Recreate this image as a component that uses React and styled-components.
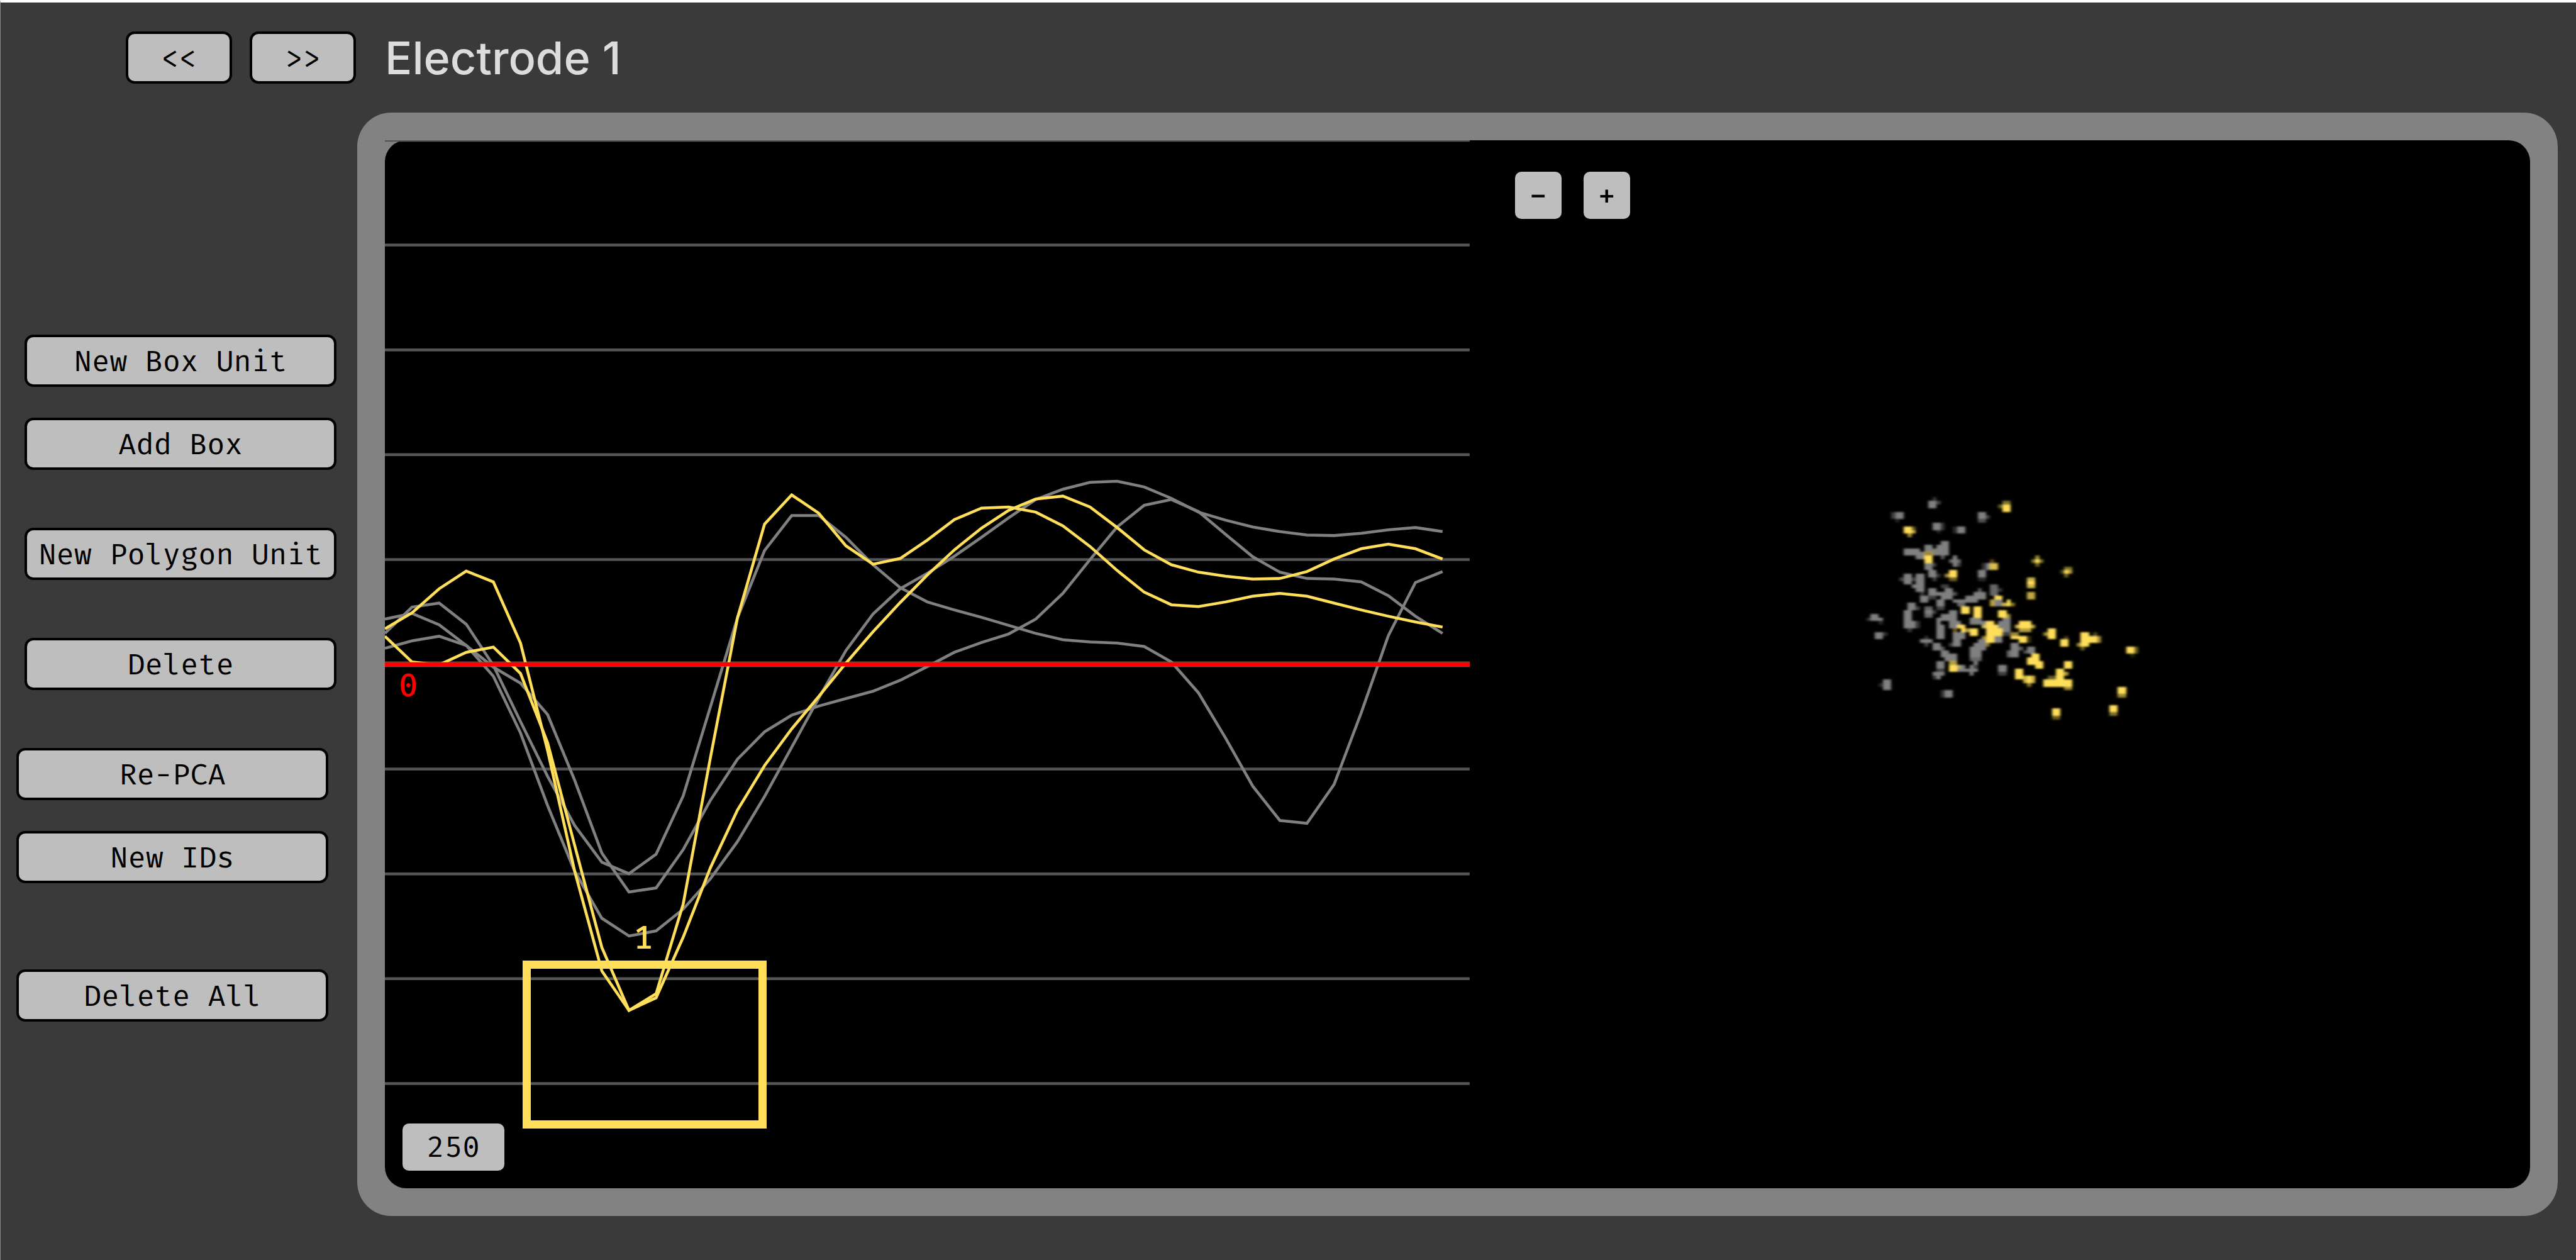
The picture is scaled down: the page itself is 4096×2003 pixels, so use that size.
import React from "react";
import styled, { createGlobalStyle } from "styled-components";

const ink = {
  page: "#3a3a3a",
  frame: "#828282",
  button: "#bebebe",
  grid: "#555555",
  trace: "#808080",
  unit: "#ffdf5a",
  zero: "#ff0000",
};

const mono = '"Fira Mono", "DejaVu Sans Mono", "Liberation Mono", monospace';

const GlobalStyle = createGlobalStyle`
  *, *::before, *::after { box-sizing: border-box; }
  html, body { margin: 0; background: ${ink.page}; }
`;

const Page = styled.div`
  display: flex;
  flex-direction: column;
  min-height: 100vh;
  background: ${ink.page};
  border-top: 4px solid #ffffff;
  border-left: 1px solid #8a8a8a;
`;

const Header = styled.header`
  display: flex;
  align-items: center;
  gap: 28px;
  padding: 46px 28px 46px 199px;
`;

const Title = styled.h1`
  margin: 0 0 0 18px;
  font-family: Inter, "Liberation Sans", sans-serif;
  font-size: 72px;
  font-weight: 500;
  line-height: 83px;
  color: #dcdcdc;
`;

const Button = styled.button`
  display: block;
  width: ${(p) => p.$width}px;
  height: 83px;
  padding: 0;
  border: 4px solid #000000;
  border-radius: 14px;
  background: ${ink.button};
  color: #000000;
  font-family: ${mono};
  font-size: 47px;
  font-weight: 400;
  line-height: 74px;
  text-align: center;
  white-space: nowrap;
  cursor: pointer;
`;

const Body = styled.main`
  flex: 1;
  display: grid;
  grid-template-columns: 567px minmax(0, 1fr);
  padding: 0 29px 70px 0;
`;

const Sidebar = styled.nav`
  display: flex;
  flex-direction: column;
  gap: 92px;
  padding-top: 353px;
`;

const Group = styled.div`
  display: flex;
  flex-direction: column;
  gap: 49px;
  padding-left: ${(p) => (p.$outdent ? 25 : 38)}px;
`;

const LowerGroups = styled.div`
  display: flex;
  flex-direction: column;
  gap: 137px;
`;

const Frame = styled.section`
  display: grid;
  padding: 44px;
  border-radius: 54px;
  background: ${ink.frame};
`;

const Screen = styled.div`
  display: grid;
  grid-template-columns: minmax(0, 1023fr) minmax(0, 1000fr);
  border-radius: 34px;
  background: #000000;
`;

const Pane = styled.div`
  position: relative;
  min-width: 0;
`;

const Drawing = styled.svg`
  position: absolute;
  inset: 0;
  display: block;
  width: 100%;
  height: 100%;
`;

const ZeroLabel = styled.span`
  position: absolute;
  top: 50%;
  left: 22px;
  padding-top: 4px;
  font-family: ${mono};
  font-size: 51px;
  font-weight: 500;
  line-height: 60px;
  color: ${ink.zero};
`;

const UnitBox = styled.div`
  position: absolute;
  left: 12.7%;
  top: 78.3%;
  width: 22.5%;
  height: 16%;
  border: 13px solid ${ink.unit};
`;

const UnitLabel = styled.span`
  position: absolute;
  bottom: 100%;
  left: 0;
  right: 0;
  padding: 0 4px 19px 0;
  font-family: ${mono};
  font-size: 51px;
  font-weight: 500;
  line-height: 60px;
  text-align: center;
  color: ${ink.unit};
`;

const OverlayButton = styled(Button)`
  height: 75px;
  border: 0;
  border-radius: 10px;
  line-height: 75px;
`;

const ZoomButton = styled(OverlayButton)`
  font-size: 56px;
`;

const ScaleCorner = styled.div`
  position: absolute;
  left: 28px;
  bottom: 28px;
`;

const ZoomBar = styled.div`
  position: relative;
  display: flex;
  gap: 35px;
  padding: 50px 72px;
`;

// Plot units of the waveform canvas: 40 sample slots, ten scale divisions.
const PLOT_W = 1897;
const PLOT_H = 1832;
const STEP = PLOT_W / 40;

const traces = [
  {
    color: ink.trace,
    y: [
      862, 816, 809, 846, 918, 1016, 1112, 1198, 1262, 1282, 1248, 1146, 991,
      835, 717, 656, 656, 694, 742, 782, 807, 821, 834, 848, 862, 873, 877,
      879, 885, 912, 966, 1045, 1129, 1189, 1194, 1126, 1001, 866, 773, 754,
    ],
  },
  {
    color: ink.trace,
    y: [
      837, 827, 847, 883, 921, 949, 1004, 1119, 1246, 1314, 1307, 1240, 1154,
      1082, 1034, 1005, 989, 976, 963, 944, 920, 895, 878, 863, 837, 792, 733,
      676, 638, 628, 649, 689, 728, 755, 766, 767, 772, 796, 832, 862,
    ],
  },
  {
    color: ink.trace,
    y: [
      888, 875, 867, 883, 937, 1036, 1163, 1278, 1360, 1391, 1382, 1344, 1291,
      1226, 1147, 1061, 975, 892, 828, 784, 757, 727, 694, 660, 628, 610, 598,
      596, 606, 626, 650, 664, 676, 684, 690, 691, 687, 681, 677, 684,
    ],
  },
  {
    color: ink.unit,
    y: [
      867, 912, 917, 895, 886, 932, 1053, 1233, 1411, 1521, 1499, 1393, 1272,
      1171, 1093, 1029, 972, 914, 859, 808, 760, 716, 678, 647, 627, 622, 641,
      677, 716, 742, 755, 762, 767, 766, 754, 732, 714, 706, 714, 732,
    ],
  },
  {
    color: ink.unit,
    y: [
      854, 826, 784, 753, 772, 879, 1067, 1278, 1452, 1521, 1492, 1335, 1080,
      835, 671, 620, 652, 709, 741, 731, 699, 663, 643, 641, 650, 674, 710,
      752, 790, 812, 815, 807, 797, 792, 797, 809, 821, 832, 842, 851,
    ],
  },
];

// Spike clusters on the scatter canvas: [column, row, width, height, opacity].
const unsorted = [
  [18, 5, 2, 2], [20, 5, 1, 1, 0.5], [19, 4, 1, 1, 0.4],
  [10, 8, 2, 2], [9, 8, 1, 2, 0.5], [10, 10, 1, 1, 0.25],
  [30, 8, 2, 2], [30, 10, 2, 1, 0.6], [32, 9, 1, 1, 0.5],
  [19, 11, 2, 2], [21, 11, 1, 2, 0.4], [20, 13, 1, 1, 0.25],
  [25, 12, 2, 2], [24, 12, 1, 2, 0.3],
  [12, 18, 4, 2], [15, 19, 2, 2], [17, 17, 2, 2], [19, 18, 3, 2],
  [21, 16, 2, 4], [20, 17, 1, 1], [21, 20, 1, 1, 0.7],
  [17, 22, 2, 2], [19, 22, 1, 1, 0.5], [18, 24, 2, 2], [20, 25, 1, 1, 0.4], [19, 26, 1, 1, 0.5],
  [24, 20, 1, 3], [23, 21, 3, 1, 0.8], [25, 22, 1, 1, 0.5],
  [30, 24, 2, 2], [30, 26, 2, 1, 0.3], [32, 22, 1, 2], [31, 22, 1, 2, 0.4],
  [12, 25, 2, 3], [11, 26, 1, 1, 0.5], [14, 26, 1, 1, 0.5],
  [15, 25, 2, 5], [14, 28, 1, 1], [16, 30, 1, 1, 0.4],
  [16, 31, 2, 2], [18, 29, 2, 2], [18, 31, 2, 1, 0.5],
  [21, 28, 2, 1, 0.5], [22, 29, 2, 1], [20, 30, 1, 1], [21, 30, 3, 2],
  [24, 30, 1, 1, 0.6], [20, 32, 2, 2], [20, 34, 2, 1, 0.5],
  [24, 32, 3, 1], [25, 33, 2, 1, 0.8],
  [27, 31, 3, 2], [29, 30, 3, 2], [30, 29, 1, 1, 0.7],
  [33, 28, 2, 3, 0.8], [35, 29, 1, 1, 0.4], [34, 32, 2, 2],
  [13, 33, 2, 2], [15, 34, 1, 1, 0.5], [12, 35, 2, 3], [12, 38, 3, 2],
  [15, 38, 1, 2, 0.4], [13, 40, 1, 1, 0.4],
  [17, 34, 2, 3, 0.8], [17, 35, 2, 1], [19, 35, 1, 1, 0.5],
  [4, 36, 2, 2], [3, 37, 1, 1, 0.4], [6, 37, 1, 1], [6, 38, 1, 1, 0.3],
  [5, 41, 2, 2], [7, 41, 1, 1, 0.4],
  [23, 35, 2, 4], [21, 36, 2, 2], [20, 37, 1, 2], [20, 39, 2, 4], [23, 38, 3, 2],
  [24, 41, 2, 4], [26, 41, 1, 2], [23, 44, 1, 1, 0.5],
  [28, 37, 3, 2], [30, 38, 2, 1], [31, 39, 1, 1],
  [35, 38, 3, 3], [36, 37, 2, 1], [36, 41, 2, 1, 0.5], [34, 41, 2, 3],
  [16, 43, 3, 1], [17, 42, 1, 1, 0.4], [17, 44, 1, 1, 0.5],
  [19, 44, 2, 2], [21, 45, 1, 1, 0.7], [21, 46, 2, 2], [23, 47, 2, 2], [22, 48, 1, 1],
  [20, 49, 2, 2], [20, 51, 2, 1, 0.5], [19, 52, 3, 1], [20, 53, 1, 1], [19, 53, 1, 1, 0.4],
  [25, 50, 2, 2], [27, 51, 3, 1], [28, 50, 1, 3], [29, 50, 1, 1, 0.5],
  [29, 44, 3, 2], [30, 43, 2, 1], [28, 45, 3, 3], [28, 48, 3, 1, 0.8], [29, 49, 1, 1],
  [35, 50, 2, 2], [35, 52, 2, 1, 0.5],
  [7, 54, 2, 3], [6, 55, 1, 1, 0.3], [22, 57, 2, 2], [21, 57, 1, 2, 0.4],
  [38, 44, 2, 4], [37, 46, 3, 2, 0.8], [40, 45, 1, 1, 0.7],
  [42, 45, 2, 2], [41, 46, 1, 1, 0.6],
];

const sorted = [
  [36, 6, 2, 2], [36, 5, 2, 1, 0.5], [35, 6, 1, 1, 0.4],
  [12, 12, 2, 2], [14, 13, 1, 1, 0.8], [14, 12, 1, 1, 0.4], [13, 14, 1, 1, 0.6],
  [17, 20, 2, 2], [17, 19, 2, 1, 0.6],
  [23, 24, 2, 2], [22, 25, 1, 1, 0.6], [23, 26, 2, 1, 0.4],
  [33, 22, 2, 2, 0.85], [33, 21, 1, 1, 0.3],
  [34, 31, 2, 1], [33, 32, 1, 2, 0.7], [37, 32, 1, 2], [36, 33, 1, 1, 0.8], [38, 33, 1, 1, 0.5],
  [26, 34, 2, 2], [29, 34, 2, 3], [35, 35, 2, 2], [37, 36, 1, 1, 0.6],
  [25, 39, 2, 1], [26, 40, 1, 1], [24, 40, 1, 1, 0.4],
  [28, 40, 2, 2], [27, 40, 1, 1, 0.7],
  [32, 38, 2, 6], [34, 40, 2, 2], [31, 39, 1, 1, 0.6], [34, 39, 1, 1], [31, 42, 1, 1, 0.6], [32, 44, 1, 1, 0.5],
  [44, 21, 1, 1], [43, 21, 1, 1, 0.5], [45, 21, 1, 1, 0.5], [44, 20, 1, 1, 0.6], [44, 22, 1, 1, 0.4],
  [51, 24, 1, 1], [50, 24, 1, 1, 0.3], [52, 24, 1, 1, 0.7], [51, 23, 2, 1, 0.5], [51, 25, 1, 1, 0.4],
  [42, 26, 2, 3, 0.8], [42, 27, 2, 1], [42, 30, 2, 2, 0.75],
  [40, 38, 3, 2], [40, 40, 3, 1, 0.7], [39, 39, 1, 1, 0.8], [43, 39, 1, 1, 0.7],
  [38, 42, 2, 1], [38, 41, 2, 1, 0.6], [40, 42, 2, 2], [42, 42, 1, 2, 0.2],
  [47, 40, 2, 3], [46, 41, 1, 1, 0.6], [50, 43, 2, 2], [51, 42, 1, 1, 0.25],
  [55, 41, 2, 4], [54, 44, 1, 1, 0.6], [55, 45, 1, 1, 0.4], [57, 42, 2, 2], [59, 42, 1, 2, 0.6], [58, 41, 1, 1, 0.3],
  [66, 45, 2, 2], [68, 45, 1, 2, 0.4], [67, 47, 1, 1, 0.15],
  [42, 48, 3, 2], [43, 47, 2, 1], [44, 49, 2, 2],
  [51, 49, 2, 2], [39, 51, 2, 3], [41, 53, 3, 2, 0.8], [42, 53, 1, 2], [42, 55, 1, 1, 0.5],
  [49, 51, 2, 3], [51, 52, 1, 1, 0.7], [46, 54, 5, 2], [47, 53, 2, 1, 0.4],
  [51, 54, 2, 2], [51, 56, 2, 1, 0.6],
  [64, 56, 2, 2], [64, 58, 2, 1, 0.6], [62, 61, 2, 2], [62, 63, 2, 1, 0.5],
  [48, 62, 2, 2], [48, 64, 2, 1, 0.4],
  [23, 50, 2, 2], [23, 49, 2, 1, 0.7], [25, 50, 1, 1, 0.4],
];

function Waveforms() {
  const divisions = Array.from({ length: 10 }, (_, i) => (i * PLOT_H) / 10);
  return (
    <Drawing
      viewBox={`0 0 ${PLOT_W} ${PLOT_H}`}
      preserveAspectRatio="none"
      role="img"
      aria-label="Spike waveforms"
    >
      {divisions.map((y, i) => (
        <line
          key={y}
          x1="0"
          x2={PLOT_W}
          y1={y}
          y2={y}
          stroke={ink.grid}
          strokeWidth={i === 5 ? 10 : 5}
        />
      ))}
      {traces.map((t, i) => (
        <polyline
          key={i}
          points={t.y.map((y, n) => `${n * STEP},${y}`).join(" ")}
          fill="none"
          stroke={t.color}
          strokeWidth="5"
        />
      ))}
      <line
        x1="0"
        x2={PLOT_W}
        y1={PLOT_H / 2}
        y2={PLOT_H / 2}
        stroke={ink.zero}
        strokeWidth="7"
      />
    </Drawing>
  );
}

function Cells({ cells, color }) {
  return (
    <g fill={color}>
      {cells.map(([x, y, w, h, o = 1], i) => (
        <rect key={i} x={x} y={y} width={w} height={h} opacity={o} />
      ))}
    </g>
  );
}

function Scatter() {
  return (
    <Drawing
      viewBox="-93.3 -94 257.4 287.7"
      preserveAspectRatio="none"
      shapeRendering="crispEdges"
      role="img"
      aria-label="Principal component scatter"
    >
      <defs>
        <filter id="smooth" filterUnits="userSpaceOnUse" x="-5" y="-5" width="85" height="80">
          <feGaussianBlur stdDeviation="0.3" />
        </filter>
      </defs>
      <g filter="url(#smooth)">
        <Cells cells={unsorted} color={ink.trace} />
        <Cells cells={sorted} color={ink.unit} />
      </g>
    </Drawing>
  );
}

export default function App() {
  return (
    <>
      <GlobalStyle />
      <Page>
        <Header>
          <Button type="button" $width={169}>{"<<"}</Button>
          <Button type="button" $width={169}>{">>"}</Button>
          <Title>Electrode 1</Title>
        </Header>
        <Body>
          <Sidebar>
            <Group>
              <Button type="button" $width={496}>New Box Unit</Button>
              <Button type="button" $width={496}>Add Box</Button>
            </Group>
            <Group>
              <Button type="button" $width={496}>New Polygon Unit</Button>
            </Group>
            <Group>
              <Button type="button" $width={496}>Delete</Button>
            </Group>
            <LowerGroups>
              <Group $outdent>
                <Button type="button" $width={496}>Re-PCA</Button>
                <Button type="button" $width={496}>New IDs</Button>
              </Group>
              <Group $outdent>
                <Button type="button" $width={496}>Delete All</Button>
              </Group>
            </LowerGroups>
          </Sidebar>
          <Frame>
            <Screen>
              <Pane>
                <Waveforms />
                <ZeroLabel>0</ZeroLabel>
                <UnitBox>
                  <UnitLabel>1</UnitLabel>
                </UnitBox>
                <ScaleCorner>
                  <OverlayButton type="button" $width={162}>250</OverlayButton>
                </ScaleCorner>
              </Pane>
              <Pane>
                <Scatter />
                <ZoomBar>
                  <ZoomButton type="button" $width={74} aria-label="Zoom out">−</ZoomButton>
                  <ZoomButton type="button" $width={74} aria-label="Zoom in">+</ZoomButton>
                </ZoomBar>
              </Pane>
            </Screen>
          </Frame>
        </Body>
      </Page>
    </>
  );
}
